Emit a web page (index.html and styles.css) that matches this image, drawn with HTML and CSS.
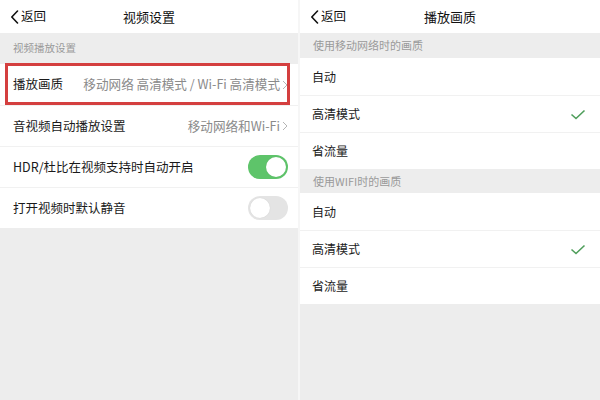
FILE: index.html
```html
<!DOCTYPE html>
<html lang="zh">
<head>
<meta charset="utf-8">
<link rel="stylesheet" href="styles.css">
</head>
<body>
<div class="screen">
  <section class="panel panel-left">
    <header class="nav">
      <span class="back"><svg class="back-icon" width="9" height="14" viewBox="0 0 9 14"><path d="M7.5 1 L1.8 7 L7.5 13" fill="none" stroke="#111" stroke-width="1.6" stroke-linecap="round" stroke-linejoin="round"/></svg>返回</span>
      <span class="title">视频设置</span>
    </header>
    <div class="sec sec-left">视频播放设置</div>
    <div class="list">
      <div class="row row-left highlight">
        <span class="label">播放画质</span>
        <span class="value">移动网络 高清模式 / Wi-Fi 高清模式<svg class="chev" width="6" height="10" viewBox="0 0 6 10"><path d="M1 1 L5 5 L1 9" fill="none" stroke="#b5b5b5" stroke-width="1"/></svg></span>
      </div>
      <div class="row row-left">
        <span class="label">音视频自动播放设置</span>
        <span class="value">移动网络和Wi-Fi<svg class="chev" width="6" height="10" viewBox="0 0 6 10"><path d="M1 1 L5 5 L1 9" fill="none" stroke="#b5b5b5" stroke-width="1"/></svg></span>
      </div>
      <div class="row row-left">
        <span class="label">HDR/杜比在视频支持时自动开启</span>
        <span class="toggle on"><span class="knob"></span></span>
      </div>
      <div class="row row-left">
        <span class="label">打开视频时默认静音</span>
        <span class="toggle"><span class="knob"></span></span>
      </div>
    </div>
  </section>
  <section class="panel panel-right">
    <header class="nav">
      <span class="back"><svg class="back-icon" width="9" height="14" viewBox="0 0 9 14"><path d="M7.5 1 L1.8 7 L7.5 13" fill="none" stroke="#111" stroke-width="1.6" stroke-linecap="round" stroke-linejoin="round"/></svg>返回</span>
      <span class="title">播放画质</span>
    </header>
    <div class="sec sec-right">使用移动网络时的画质</div>
    <div class="list">
      <div class="row row-right"><span class="label-sm">自动</span></div>
      <div class="row row-right"><span class="label-sm">高清模式</span><svg class="check" width="16" height="11" viewBox="0 0 16 11"><path d="M1.5 5.5 L6 9.5 L14.5 1.5" fill="none" stroke="#4f9e5b" stroke-width="1.6"/></svg></div>
      <div class="row row-right"><span class="label-sm">省流量</span></div>
    </div>
    <div class="sec sec-right sec-2">使用WIFI时的画质</div>
    <div class="list">
      <div class="row row-right"><span class="label-sm">自动</span></div>
      <div class="row row-right"><span class="label-sm">高清模式</span><svg class="check" width="16" height="11" viewBox="0 0 16 11"><path d="M1.5 5.5 L6 9.5 L14.5 1.5" fill="none" stroke="#4f9e5b" stroke-width="1.6"/></svg></div>
      <div class="row row-right"><span class="label-sm">省流量</span></div>
    </div>
  </section>
</div>
</body>
</html>
```
FILE: styles.css
```css
* { box-sizing: border-box; }
html, body {
  margin: 0;
  padding: 0;
  width: 600px;
  height: 400px;
  overflow: hidden;
  background: #ededed;
  font-family: "Noto Sans CJK SC", "Noto Sans", sans-serif;
  color: #1a1a1a;
}
.screen {
  display: flex;
  gap: 2px;
  height: 400px;
  background: #f6f6f6;
}
.panel {
  background: #ededed;
  height: 400px;
}
.panel-left { width: 298px; }
.panel-right { width: 300px; }

.nav {
  height: 33px;
  background: #fff;
  display: grid;
  grid-template-columns: 1fr auto 1fr;
  align-items: center;
  padding: 0 10px;
}
.back {
  display: flex;
  align-items: center;
  gap: 2px;
  font-size: 12.5px;
  line-height: 1;
  color: #111;
}
.back-icon { display: block; }
.title {
  font-size: 13px;
  line-height: 1;
  color: #111;
}

.sec {
  color: #9a9a9a;
  display: flex;
  align-items: center;
  padding-left: 13px;
  line-height: 1;
}
.sec-left { height: 31px; font-size: 10.5px; }
.sec-right { height: 25px; font-size: 11px; }
.sec-2 { height: 24px; }

.list { background: #fff; }
.row {
  display: flex;
  align-items: center;
  justify-content: space-between;
  background: #fff;
  border-top: 1px solid #f1f1f1;
}
.list .row:first-child { border-top: none; }
.row-left {
  height: 41px;
  padding: 0 10px 0 13px;
}
.row-right {
  height: 37px;
  padding: 0 14px 0 12px;
}
.label {
  font-size: 12.5px;
  line-height: 1;
  color: #1a1a1a;
}
.label-sm {
  font-size: 12px;
  line-height: 1;
  color: #1a1a1a;
}
.value {
  display: flex;
  align-items: center;
  gap: 2px;
  font-size: 12.6px;
  line-height: 1;
  color: #8a8a8a;
}
.chev { display: block; }

.highlight { position: relative; }
.highlight::after {
  content: "";
  position: absolute;
  left: 5px;
  right: 8px;
  top: -1px;
  bottom: 0;
  border: 3px solid #d43f3f;
  pointer-events: none;
}

.toggle {
  width: 40px;
  height: 24px;
  border-radius: 12px;
  background: #e4e4e4;
  display: flex;
  align-items: center;
  padding: 2px;
  justify-content: flex-start;
}
.toggle.on {
  background: #5ec46a;
  justify-content: flex-end;
}
.knob {
  width: 20px;
  height: 20px;
  border-radius: 50%;
  background: #fff;
  box-shadow: 0 0 1px rgba(0,0,0,0.15);
}
.check { display: block; }
```
